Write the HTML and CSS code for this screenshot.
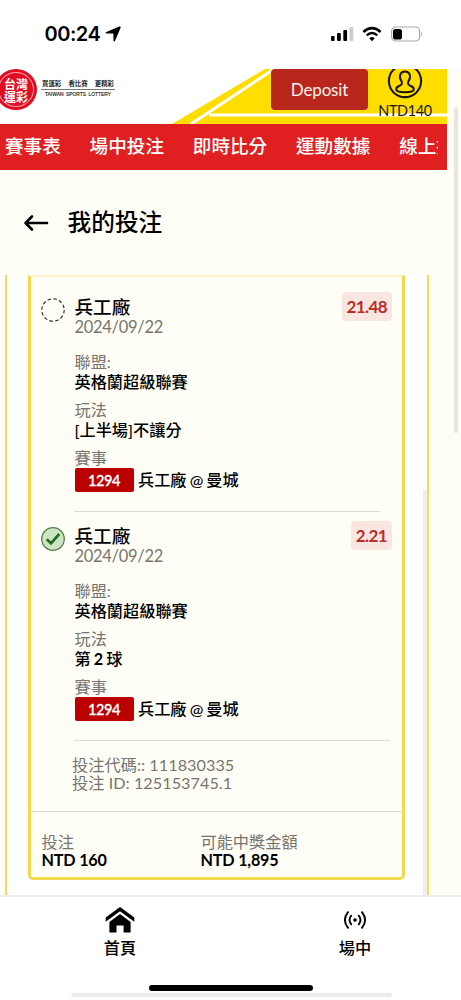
FILE: index.html
```
<!DOCTYPE html>
<html lang="zh-Hant">
<head>
<meta charset="utf-8">
<title>我的投注</title>
<link rel="stylesheet" href="styles.css">
</head>
<body>
<div class="phone">
  <div class="status">
    <span class="clock">00:24</span>
    <svg class="loc" width="16" height="16" viewBox="0 0 16 16"><path d="M14.2 .6Q16.2 -.1 15.6 1.8L10.2 14.4Q9.2 16.4 8.4 14.4V8.2Q8.4 7.6 7.8 7.6H1.6Q-.5 6.9 1.4 5.9Z"/></svg>
    <svg class="signals" width="94" height="18" viewBox="0 0 94 18">
      <rect x="1" y="10" width="3.6" height="5" rx="1"/><rect x="7" y="7" width="3.8" height="8" rx="1"/><rect x="13.3" y="4" width="3.8" height="11" rx="1"/><rect x="19.5" y="1" width="3.8" height="14" rx="1" fill="#ccc"/>
      <g fill="none" stroke="#000" stroke-width="2.6"><path d="M33.4 5.9Q42 -1.6 50.6 5.9"/><path d="M36.6 9.4Q42 4.6 47.4 9.4"/></g><path d="M39.2 12.2Q42 9.8 44.8 12.2L42 15.2Z"/>
      <rect x="61.6" y="1" width="28" height="14" rx="4.3" fill="none" stroke="#aaa" stroke-width="1.2"/><rect x="63" y="3" width="9" height="10.5" rx="2.6"/><path d="M91.3 5.5Q93.3 8 91.3 10.5Z" fill="#aaa"/>
    </svg>
  </div>
  <div class="viewport">
    <header class="top">
      <svg class="stripes" width="447" height="55" viewBox="0 0 447 55">
        <path d="M265 0H447V55H172Z" fill="#fedd00"/>
        <path d="M274 0L191 55M209 46H447" stroke="#fff" stroke-width="3" fill="none"/>
      </svg>
      <div class="brand">
        <div class="seal"><div class="seal-text"><span>台灣</span><span>運彩</span></div></div>
        <div class="slogan"><div class="zh"><span>買運彩</span><span>看比賽</span><span>更精彩</span></div><div class="en">TAIWAN SPORTS LOTTERY</div></div>
      </div>
      <div class="deposit">Deposit</div>
      <div class="account">
        <svg width="36" height="30" viewBox="0 0 36 30" fill="none" stroke="#1c1800" stroke-width="2.1"><circle cx="18" cy="12" r="16.1"/><path d="M18 2.5C14.2 2.5 12.4 5.6 13.1 9C13.5 11.2 15.7 12.5 14.8 15C13.9 17.4 9.2 16.6 9.2 20.3C9.2 24.2 26.8 24.2 26.8 20.3C26.8 16.6 22.1 17.4 21.2 15C20.3 12.5 22.5 11.2 22.9 9C23.6 5.6 21.8 2.5 18 2.5Z"/></svg>
        <div class="balance">NTD140</div>
      </div>
    </header>
    <nav class="menu"><div class="menu-track"><span>賽事表</span><span>場中投注</span><span>即時比分</span><span>運動數據</span><span>線上投注</span></div></nav>
    <div class="page-title">
      <svg width="26" height="18" viewBox="0 0 26 18" fill="none" stroke="#000" stroke-width="2.6" stroke-linecap="round" stroke-linejoin="round"><path d="M24 9H2.5M9 2.5L2.5 9L9 15.5"/></svg>
      <h1>我的投注</h1>
    </div>
    <main class="list">
      <section class="slip">
        <article class="pick">
          <div class="icon"><svg width="24" height="24" viewBox="0 0 24 24"><circle cx="12" cy="12" r="11.2" fill="none" stroke="#222" stroke-width="1.1" stroke-dasharray="3.5 2.36"/></svg></div>
          <div class="info">
            <h2>兵工廠</h2><div class="muted">2024/09/22</div>
            <dl><dt>聯盟:</dt><dd>英格蘭超級聯賽</dd><dt>玩法</dt><dd>[上半場]不讓分</dd><dt>賽事</dt></dl>
            <div class="match"><span class="code">1294</span><span>兵工廠 @ 曼城</span></div>
          </div>
          <div class="odds">21.48</div>
        </article>
        <div class="rule short"></div>
        <article class="pick">
          <div class="icon"><svg width="24" height="24" viewBox="0 0 24 24"><circle cx="12" cy="12" r="11.3" fill="#cde5c4" stroke="#527b4d" stroke-width="1.2"/><path d="M5.8 12.3L10 16.3L18.2 7" fill="none" stroke="#1d6c1e" stroke-width="2.7"/></svg></div>
          <div class="info">
            <h2>兵工廠</h2><div class="muted">2024/09/22</div>
            <dl><dt>聯盟:</dt><dd>英格蘭超級聯賽</dd><dt>玩法</dt><dd class="nth">第 <b>2</b> 球</dd><dt>賽事</dt></dl>
            <div class="match"><span class="code">1294</span><span>兵工廠 @ 曼城</span></div>
          </div>
          <div class="odds">2.21</div>
        </article>
        <div class="rule"></div>
        <div class="refs muted"><div>投注代碼:: 111830335</div><div>投注 ID: 125153745.1</div></div>
        <footer class="totals">
          <div><div class="muted">投注</div><b>NTD 160</b></div>
          <div><div class="muted">可能中獎金額</div><b>NTD 1,895</b></div>
        </footer>
      </section>
      <div class="list-scroll"></div>
    </main>
    <div class="page-scroll"></div>
  </div>
  <div class="tabs">
    <div class="tab home"><svg width="30" height="26" viewBox="0 0 30 26"><path d="M15 0L29.3 10.6V14.8L15 4.2L.7 14.8V10.6Z"/><path d="M15 7L25.6 15V25.5H18.6V18.5H11.5V25.5H4.4V15Z"/></svg><span>首頁</span></div>
    <div class="tab live"><svg width="24" height="18" viewBox="0 0 24 18" fill="none" stroke="#000" stroke-width="1.9" stroke-linecap="round"><circle cx="12" cy="9" r="1.8" fill="#000" stroke="none"/><path d="M8.2 4.7Q4.8 9 8.2 13.3M15.8 4.7Q19.2 9 15.8 13.3M5 1.2Q-1.2 9 5 16.8M19 1.2Q25.2 9 19 16.8"/></svg><span>場中</span></div>
    <div class="home-bar"></div><div class="h-scroll"></div>
  </div>
</div>
</body>
</html>
```
FILE: styles.css
```
* { box-sizing: border-box; }
body { margin: 0; background: #fff; color: #000; font-family: Lato, "Noto Sans CJK TC", sans-serif; }
h1, h2, dl, dd { margin: 0; }
.phone { width: 461px; height: 1000px; overflow: hidden; display: flex; flex-direction: column; }
.status { height: 69px; flex: none; display: flex; align-items: flex-start; padding: 22px 37px 0 44.5px; }
.clock { font: 600 20px/25px Inter, sans-serif; width: 56px; letter-spacing: -.5px; white-space: nowrap; }
.loc { margin: 4px 0 0 4.5px; }
.signals { margin: 4px 0 0 auto; }
.viewport { position: relative; height: 826px; flex: none; background: #fffef6; }
.top { position: relative; width: 447px; height: 55px; background: #fff; display: flex; overflow: hidden; }
.stripes { position: absolute; left: 0; top: 0; }
.brand { display: flex; width: 271px; }
.seal { width: 42px; height: 41px; margin-left: -5px; border-radius: 50%; background: #e20b22; padding: 3px; flex: none; }
.seal-text { height: 100%; border: 1px solid #f9a5ab; border-radius: 50%; color: #fff; font: 700 12px/13px "Noto Sans CJK TC", sans-serif; display: flex; flex-direction: column; align-items: center; justify-content: center; white-space: nowrap; }
.slogan { margin: 9px 0 0 4px; width: 74px; color: #222; }
.zh { display: flex; justify-content: space-between; padding: 0 1px; font: 700 6.4px/11px "Noto Sans CJK TC", sans-serif; border-bottom: 1px solid #777; }
.en { font: 4.9px/10px "Liberation Sans", sans-serif; white-space: nowrap; text-align: center; word-spacing: 1.2px; -webkit-text-stroke: .15px #222; }
.deposit { position: relative; width: 97px; height: 41px; border-radius: 4px; background: #b8261c; color: #fff3ee; font-size: 17px; letter-spacing: -.15px; line-height: 42px; text-align: center; }
.account { position: relative; width: 64px; margin-left: 5px; display: flex; flex-direction: column; align-items: center; }
.account svg { flex: none; }
.balance { font-size: 14.4px; letter-spacing: -.35px; line-height: 18px; margin-top: 3px; color: #1c1800; }
.menu { width: 447px; height: 46px; background: #df1f20; padding: 0 9.5px 0 5px; }
.menu-track { display: flex; gap: 28.8px; overflow: hidden; white-space: nowrap; color: #fff; font-size: 18.6px; font-weight: 500; line-height: 45px; }
.page-title { height: 105px; display: flex; align-items: center; padding-left: 23px; }
.page-title h1 { font-size: 23.7px; line-height: 30px; font-weight: 500; margin: -1px 0 0 18.5px; }
.list { position: relative; width: 424px; height: 621px; margin-left: 5px; background: #fff; border: solid #f9d955; border-width: 0 2px; padding: 0 22px 0 21px; display: flex; align-items: flex-start; }
.slip { width: 377px; height: 605px; background: #fffef6; border: 3px solid #f4d94f; border-top: 2px solid #fbf4cb; border-radius: 0 0 5px 5px; }
.pick { display: flex; padding: 20px 10px 0; height: 234px; }
.pick .icon { width: 24px; margin-top: 1px; }
.info { margin-left: 9.5px; flex: 1; }
.info h2 { font-size: 18.6px; line-height: 20px; font-weight: 500; }
.muted { color: #77746f; font-size: 16.2px; line-height: 20px; }
.info > .muted { font-size: 16.5px; letter-spacing: -.3px; }
dl { margin-top: 15px; font-size: 16.2px; line-height: 20px; }
dt { color: #77746f; }
dd { font-weight: 500; margin-bottom: 8px; }
.nth { word-spacing: -1px; }
.match { display: flex; align-items: center; gap: 4.5px; font-size: 16.2px; line-height: 24px; font-weight: 500; white-space: nowrap; word-spacing: -1px; }
.code { width: 59px; height: 24px; border-radius: 2px; background: #ba0000; color: #fff; text-align: center; font-size: 14.5px; letter-spacing: -.4px; font-weight: 500; -webkit-text-stroke: .3px #fff; line-height: 25px; }
.odds { align-self: flex-start; margin-top: -5px; padding: 0 5px; height: 29px; border-radius: 4px; background: #f9e6e0; color: #b82d29; font-weight: 700; font-size: 17px; letter-spacing: -.6px; line-height: 30px; }
.rule { height: 1px; background: #dedcd6; margin: 0 12px 0 43px; }
.rule.short { margin-right: 22px; margin-bottom: -6px; }
.refs { margin: 15px 0 0 41px; height: 55px; }
.refs div { line-height: 18px; letter-spacing: .05px; }
.totals { border-top: 1px solid #dedcd6; display: grid; grid-template-columns: 159px 1fr; padding: 21px 0 0 10.5px; }
.totals .muted { line-height: 18px; }
.totals b { display: block; font-size: 16.2px; letter-spacing: -.2px; line-height: 17px; }
.list-scroll { position: absolute; right: 0; top: 215px; width: 4px; bottom: 0; background: #efedf3; }
.page-scroll { position: absolute; left: 454px; top: 38px; width: 4px; height: 326px; border-radius: 2px; background: #e7e5e0; }
.tabs { position: relative; height: 105px; background: #fff; border-top: 2px solid #eeedec; display: grid; grid-template-columns: 240px 1fr; }
.tab { display: flex; flex-direction: column; align-items: center; padding-top: 10px; font-size: 16.2px; font-weight: 500; line-height: 22px; }
.tab span { margin-top: 4px; }
.tab.live { padding: 14px 0 0 9px; }
.tab.live span { margin-top: 8px; }
.home-bar { position: absolute; left: 149px; top: 88px; width: 164px; height: 6px; border-radius: 3px; background: #000; }
.h-scroll { position: absolute; left: 71px; top: 96px; width: 321px; height: 4px; border-radius: 2px; background: #ececec; }
```
